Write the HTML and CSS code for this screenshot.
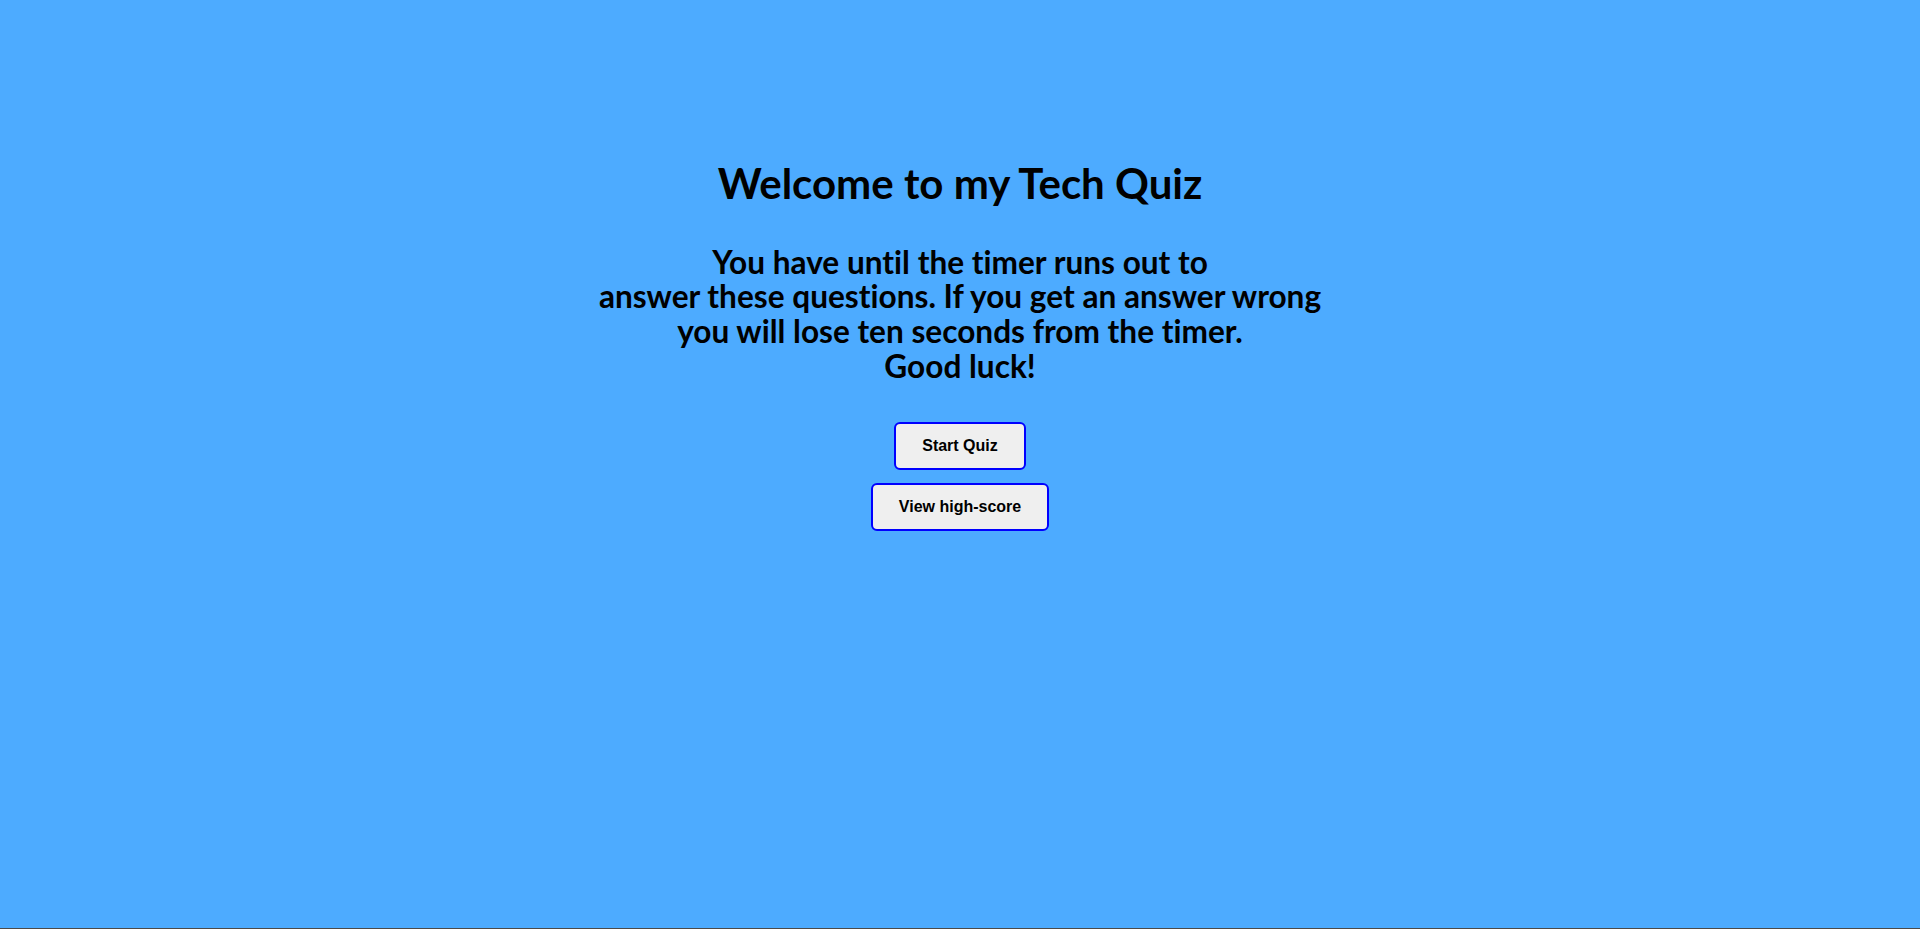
FILE: index.html
```html
<!DOCTYPE html>
<html lang="en">
<head>
<meta charset="utf-8">
<title>Tech Quiz</title>
<link rel="stylesheet" href="styles.css">
</head>
<body>
<main class="intro">
  <h1 class="title">Welcome to my Tech Quiz</h1>
  <p class="rules">You have until the timer runs out to<br>answer these questions. If you get an answer wrong<br>you will lose ten seconds from the timer.<br>Good luck!</p>
  <div class="actions">
    <button class="btn" type="button">Start Quiz</button>
    <button class="btn" type="button">View high-score</button>
  </div>
</main>
</body>
</html>
```

FILE: styles.css
```css
html, body {
  margin: 0;
  padding: 0;
}

body {
  background: #4dabff;
  min-height: 928px;
  border-bottom: 1px solid #4a4a4a;
  font-family: Lato, "Liberation Sans", sans-serif;
  font-variant-ligatures: none;
  color: #000;
}

.intro {
  display: flex;
  flex-direction: column;
  align-items: center;
  padding-top: 159px;
  text-align: center;
}

.title {
  margin: 0;
  font-size: 42px;
  line-height: 48px;
  font-weight: 700;
}

.rules {
  margin: 37.5px 0 0;
  font-size: 31.6px;
  line-height: 34.7px;
  font-weight: 700;
}

.actions {
  margin-top: 39px;
  display: flex;
  flex-direction: column;
  align-items: center;
  gap: 13px;
}

.btn {
  font-family: "Liberation Sans", Arial, sans-serif;
  font-size: 16px;
  font-weight: 700;
  line-height: 18px;
  color: #000;
  background: #efefef;
  border: 2px solid #0000ff;
  border-radius: 6px;
  padding: 13px 26px;
  cursor: pointer;
}
```
